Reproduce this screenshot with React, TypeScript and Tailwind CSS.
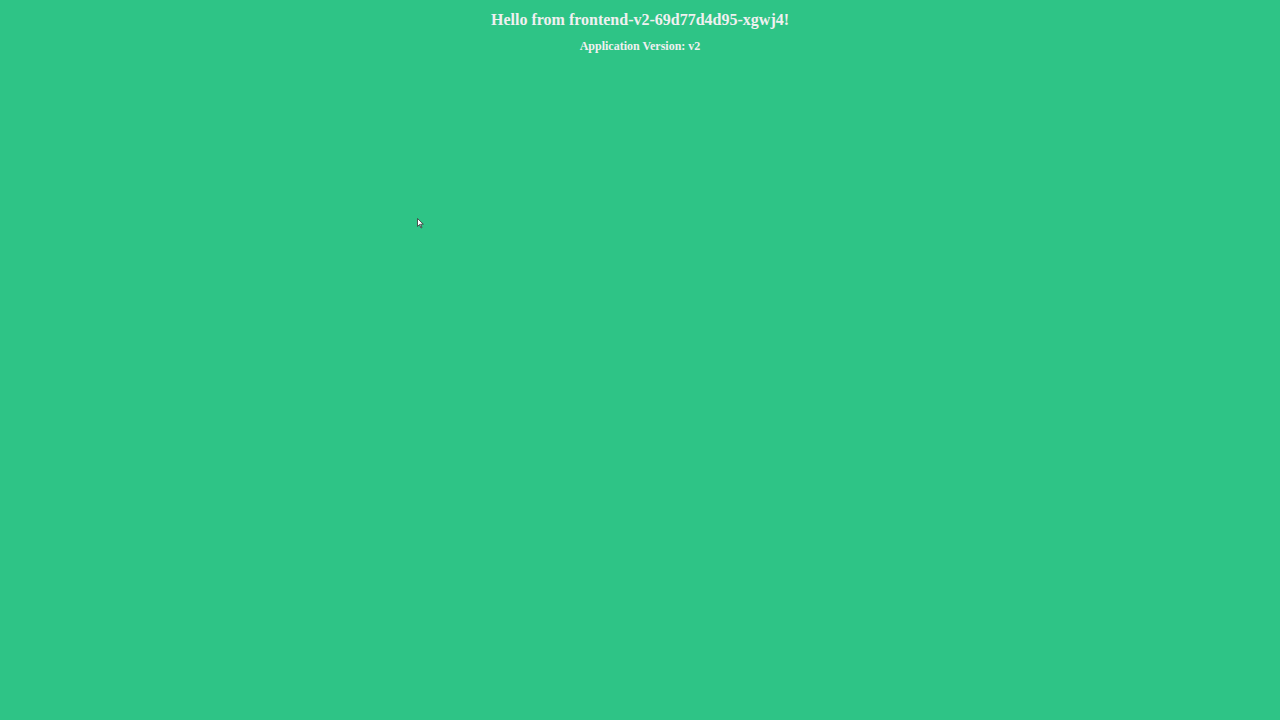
export default function App() {
  return (
    <div className="relative min-h-[720px] w-full bg-[#2ec486] font-['Liberation_Serif',serif] text-[#f0f0f0]">
      <div className="flex flex-col items-center pt-[11px]">
        <h1 className="text-[16px] font-bold leading-[18px]">Hello from frontend-v2-69d77d4d95-xgwj4!</h1>
        <h2 className="mt-[10px] text-[12px] font-bold leading-[14px]">Application Version: v2</h2>
      </div>
      <svg className="absolute left-[417px] top-[218px]" width="7" height="11" viewBox="0 0 7 11">
        <path d="M0.5 0.5 L0.5 8.5 L2.5 6.5 L4 10 L5 9.5 L3.6 6.2 L6.3 6.2 Z" fill="#ffffff" stroke="#333333" strokeWidth="0.8" />
      </svg>
    </div>
  );
}
